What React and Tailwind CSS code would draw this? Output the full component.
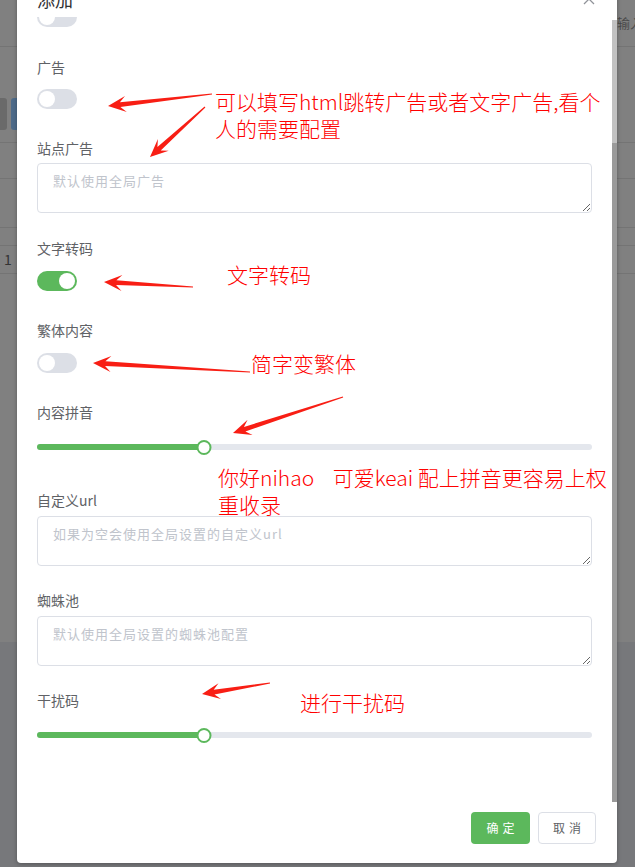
import React from "react";

function Toggle({ on = false, className = "" }) {
  return (
    <div
      className={
        "relative w-[40px] h-[20px] rounded-full shrink-0 " +
        (on ? "bg-[#5cb85c] " : "bg-[#dcdfe6] ") +
        className
      }
    >
      <div
        className={
          "absolute top-[2px] w-[16px] h-[16px] rounded-full bg-white " +
          (on ? "left-[22px]" : "left-[2px]")
        }
      />
    </div>
  );
}

function Label({ children, className = "" }) {
  return (
    <div className={"h-[20px] leading-[20px] text-[14px] text-[#606266] " + className}>
      {children}
    </div>
  );
}

function Area({ placeholder, className = "" }) {
  return (
    <textarea
      placeholder={placeholder}
      className={
        "block w-full h-[50px] border border-[#dcdfe6] rounded-[4px] px-[15px] py-[5px] text-[13px] leading-[24px] tracking-[1px] text-[#606266] placeholder:text-[#c0c4cc] font-['Noto_Sans_CJK_SC',sans-serif] outline-none " +
        className
      }
    />
  );
}

function Slider({ className = "" }) {
  return (
    <div className={"relative w-full h-[16px] flex items-center " + className}>
      <div className="w-full h-[6px] rounded-full bg-[#e4e7ed]" />
      <div className="absolute left-0 top-[5px] w-[30%] h-[6px] rounded-full bg-[#5cb85c]" />
      <div className="absolute left-[30%] top-[0.5px] -translate-x-1/2 w-[15px] h-[15px] rounded-full border-2 border-[#5cb85c] bg-white" />
    </div>
  );
}

function arrowPoints(tx, ty, hx, hy, L = 18, W = 8) {
  const dx = tx - hx;
  const dy = ty - hy;
  const len = Math.hypot(dx, dy);
  const ux = dx / len;
  const uy = dy / len;
  const nx = -uy;
  const ny = ux;
  const N = 0.68 * L;
  const w1 = 2.4;
  const w0 = 0.6;
  const pts = [
    [hx, hy],
    [hx + ux * L + nx * W, hy + uy * L + ny * W],
    [hx + ux * N + nx * w1, hy + uy * N + ny * w1],
    [tx + nx * w0, ty + ny * w0],
    [tx - nx * w0, ty - ny * w0],
    [hx + ux * N - nx * w1, hy + uy * N - ny * w1],
    [hx + ux * L - nx * W, hy + uy * L - ny * W],
  ];
  return pts.map((p) => p[0].toFixed(1) + "," + p[1].toFixed(1)).join(" ");
}

const arrows = [
  [212, 94, 108, 106],
  [205, 107, 150, 157],
  [193, 287, 104, 282],
  [250, 372, 93, 363],
  [343, 397, 233, 433],
  [270, 683, 202, 694],
];

export default function App() {
  return (
    <div className="relative w-[635px] h-[867px] overflow-hidden bg-[#808080] font-['Noto_Sans_CJK_SC',sans-serif]">
      {/* underlying page (dimmed) */}
      <div className="flex flex-col h-full">
        <div className="h-[642px] bg-[#808080] flex flex-col">
          <div className="h-[47px] border-b border-[#747474] flex items-center">
            <span className="ml-[604px] text-[13px] text-[#4a4a4a] whitespace-nowrap">请输入</span>
          </div>
          <div className="h-[96px] border-b border-[#747474] flex items-start pt-[51px]">
            <div className="w-[7px] h-[32px] rounded-r-[3px] bg-[#6a6a6a]" />
            <div className="ml-[4px] w-[12px] h-[32px] rounded-[3px] bg-[#4e6b8a]" />
          </div>
          <div className="h-[36px] border-b border-[#747474]" />
          <div className="h-[49px] border-b border-[#747474]" />
          <div className="h-[18px] border-b border-[#747474]" />
          <div className="h-[28px] border-b border-[#747474] flex items-center pl-[4px] text-[14px] text-[#333]">1</div>
        </div>
        <div className="flex-1 bg-[#77787b]" />
      </div>

      {/* modal */}
      <div className="absolute left-[17px] top-[-30px] w-[600px] h-[893px] bg-white rounded-[4px] shadow-[0_1px_4px_rgba(0,0,0,0.3)] flex flex-col">
        <div className="h-[47px] shrink-0 flex items-start justify-between pl-[20px] pr-[22px] pt-[17px]">
          <div className="text-[18px] leading-[24px] text-[#303133]">添加</div>
          <svg width="12" height="12" viewBox="0 0 12 12" className="mt-[6px]">
            <path d="M1 1 L11 11 M11 1 L1 11" stroke="#909399" strokeWidth="1.3" fill="none" />
          </svg>
        </div>
        <div className="relative flex-1 overflow-hidden">
          <div className="-mt-[10px] pl-[20px] pr-[25px] flex flex-col">
            <Toggle />
            <Label className="mt-[30px]">广告</Label>
            <Toggle className="mt-[12px]" />
            <Label className="mt-[29px]">站点广告</Label>
            <Area className="mt-[5px]" placeholder="默认使用全局广告" />
            <Label className="mt-[25px]">文字转码</Label>
            <Toggle on className="mt-[13px]" />
            <Label className="mt-[29px]">繁体内容</Label>
            <Toggle className="mt-[13px]" />
            <Label className="mt-[29px]">内容拼音</Label>
            <Slider className="mt-[17px]" />
            <Label className="mt-[35px]">自定义url</Label>
            <Area className="mt-[6px]" placeholder="如果为空会使用全局设置的自定义url" />
            <Label className="mt-[24px]">蜘蛛池</Label>
            <Area className="mt-[6px]" placeholder="默认使用全局设置的蜘蛛池配置" />
            <Label className="mt-[24px]">干扰码</Label>
            <Slider className="mt-[17px]" />
          </div>
          {/* scrollbar */}
          <div className="absolute right-0 top-[3px] bottom-0 w-[5px] bg-[#9a9a9a]">
            <div className="h-[123px] bg-[#c1c1c1]" />
          </div>
        </div>
        <div className="h-[61px] shrink-0 flex justify-end items-start gap-[8px] pt-[10px] pr-[21px]">
          <button className="w-[59px] h-[32px] rounded-[4px] bg-[#5cb85c] text-white text-[12px] tracking-[4px] pl-[4px]">
            确定
          </button>
          <button className="w-[58px] h-[32px] rounded-[4px] bg-white border border-[#dcdfe6] text-[#606266] text-[12px] tracking-[4px] pl-[4px]">
            取消
          </button>
        </div>
      </div>

      {/* annotations */}
      <div className="absolute left-[215px] top-[88px] text-[21px] leading-[27px] font-light text-[#ff0000] whitespace-nowrap">
        可以填写html跳转广告或者文字广告,看个
        <br />
        人的需要配置
      </div>
      <div className="absolute left-[227px] top-[261px] text-[21px] leading-[27px] font-light text-[#ff0000] whitespace-nowrap">
        文字转码
      </div>
      <div className="absolute left-[251px] top-[350px] text-[21px] leading-[27px] font-light text-[#ff0000] whitespace-nowrap">
        简字变繁体
      </div>
      <div className="absolute left-[218px] top-[464px] text-[21px] leading-[27px] font-light text-[#ff0000] whitespace-pre">
        {"你好nihao    可爱keai 配上拼音更容易上权\n重收录"}
      </div>
      <div className="absolute left-[300px] top-[689px] text-[21px] leading-[27px] font-light text-[#ff0000] whitespace-nowrap">
        进行干扰码
      </div>

      <svg className="absolute inset-0 pointer-events-none" width="635" height="867" viewBox="0 0 635 867">
        {arrows.map((a, i) => (
          <polygon key={i} points={arrowPoints(a[0], a[1], a[2], a[3])} fill="#f81e14" />
        ))}
      </svg>
    </div>
  );
}
